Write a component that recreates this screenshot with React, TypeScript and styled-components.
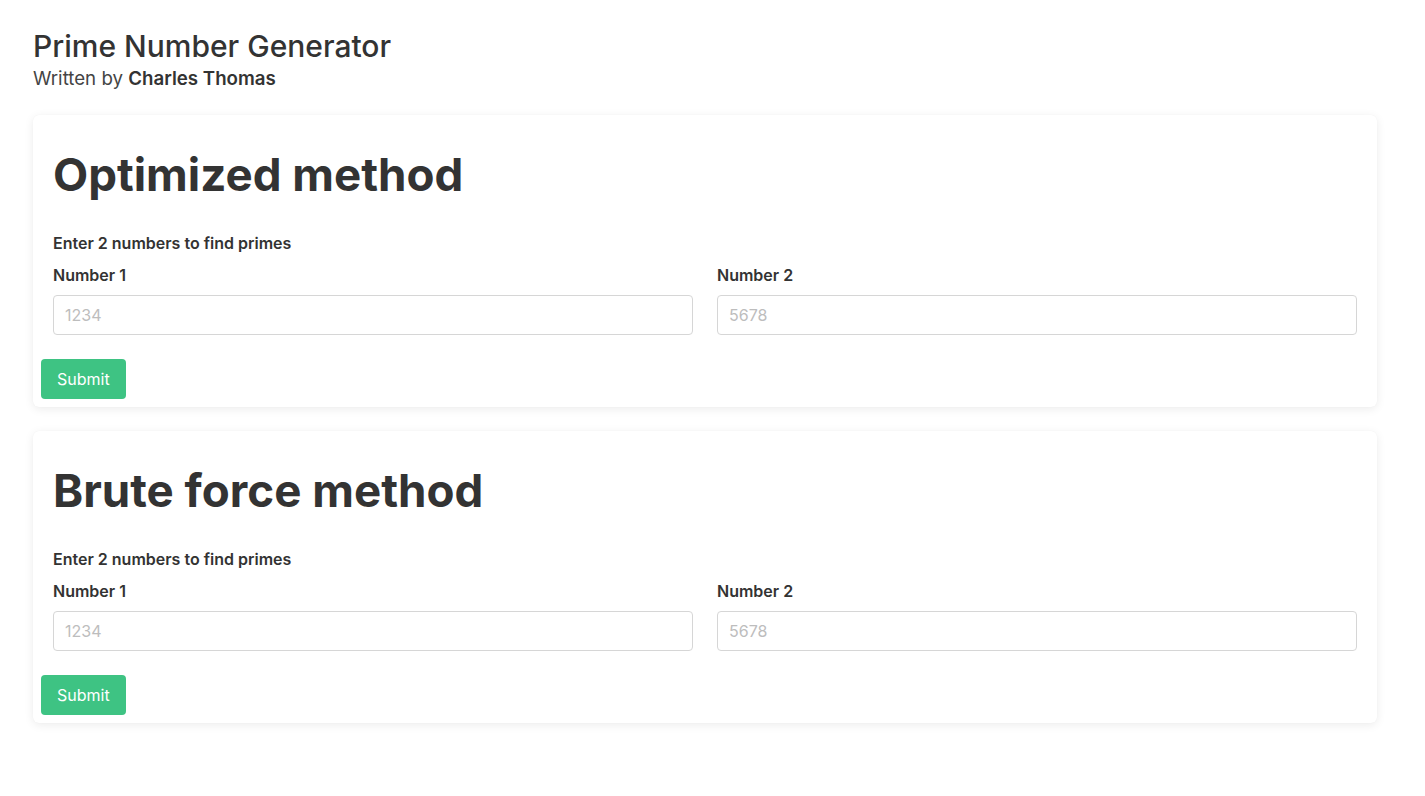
import React from "react";
import styled, { createGlobalStyle } from "styled-components";

const GlobalStyle = createGlobalStyle`
  * { box-sizing: border-box; }
  html, body { margin: 0; padding: 0; background: #ffffff; }
  body {
    font-family: Inter, "Noto Sans", "Liberation Sans", sans-serif;
    color: #333333;
  }
`;

const Page = styled.div`
  padding: 28px 48px 40px 33px;
`;

const Header = styled.header`
  display: flex;
  flex-direction: column;
  gap: 2px;
  margin-bottom: 23px;
`;

const Title = styled.h2`
  margin: 0;
  font-size: 30px;
  font-weight: 500;
  line-height: 36px;
  color: #333333;
`;

const Byline = styled.div`
  font-size: 18.7px;
  line-height: 26px;
  color: #444444;
  b {
    font-weight: 600;
    color: #333333;
  }
`;

const CardList = styled.div`
  display: flex;
  flex-direction: column;
  gap: 24px;
`;

const Card = styled.section`
  background: #ffffff;
  border-radius: 6px;
  box-shadow: 0 2px 10px rgba(0, 0, 0, 0.08), 0 0 1px rgba(0, 0, 0, 0.05);
  padding: 32px 20px 8px 20px;
`;

const CardTitle = styled.h1`
  margin: 0 0 28px 0;
  font-size: 45.7px;
  font-weight: 700;
  line-height: 56px;
  color: #333333;
`;

const Legend = styled.div`
  font-size: 16px;
  font-weight: 600;
  line-height: 24px;
  margin-bottom: 8px;
`;

const Fields = styled.div`
  display: grid;
  grid-template-columns: 1fr 1fr;
  gap: 24px;
`;

const Field = styled.label`
  display: flex;
  flex-direction: column;
  gap: 8px;
`;

const Label = styled.span`
  font-size: 16px;
  font-weight: 600;
  line-height: 24px;
`;

const Input = styled.input`
  height: 40px;
  width: 100%;
  border: 1px solid #d6d6d6;
  border-radius: 4px;
  padding: 0 11px;
  font-family: inherit;
  font-size: 16px;
  color: #333333;
  background: #ffffff;
  outline: none;
  &::placeholder {
    color: #bdbdbd;
  }
`;

const Actions = styled.div`
  margin: 24px 0 0 -12px;
`;

const SubmitButton = styled.button`
  height: 40px;
  padding: 0 16px;
  border: none;
  border-radius: 4px;
  background: #3ec383;
  color: #ffffff;
  font-family: inherit;
  font-size: 16px;
  font-weight: 400;
  cursor: pointer;
`;

function MethodCard({ title }: { title: string }) {
  return (
    <Card>
      <CardTitle>{title}</CardTitle>
      <Legend>Enter 2 numbers to find primes</Legend>
      <Fields>
        <Field>
          <Label>Number 1</Label>
          <Input type="text" placeholder="1234" />
        </Field>
        <Field>
          <Label>Number 2</Label>
          <Input type="text" placeholder="5678" />
        </Field>
      </Fields>
      <Actions>
        <SubmitButton>Submit</SubmitButton>
      </Actions>
    </Card>
  );
}

export default function App() {
  return (
    <>
      <GlobalStyle />
      <Page>
        <Header>
          <Title>Prime Number Generator</Title>
          <Byline>
            Written by <b>Charles Thomas</b>
          </Byline>
        </Header>
        <CardList>
          <MethodCard title="Optimized method" />
          <MethodCard title="Brute force method" />
        </CardList>
      </Page>
    </>
  );
}
